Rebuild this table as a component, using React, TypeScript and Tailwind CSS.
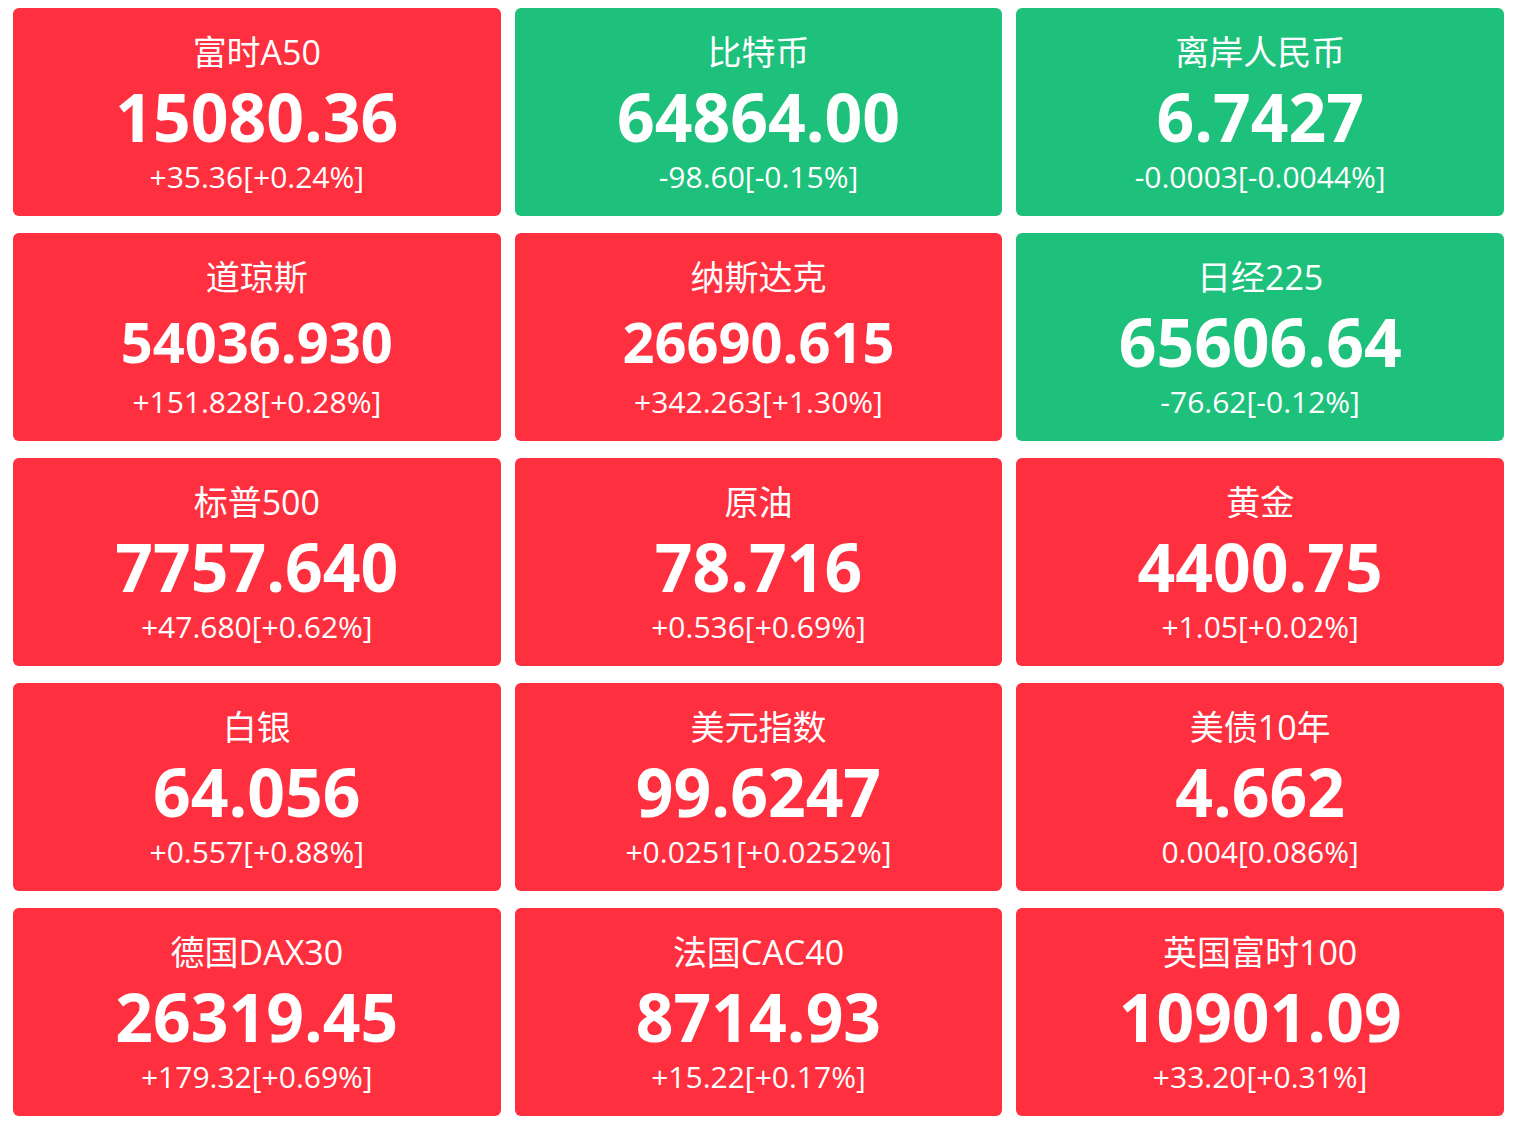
import React from "react";

type Quote = {
  name: string;
  price: string;
  change: string;
  up: boolean;
};

const quotes: Quote[] = [
  { name: "富时A50", price: "15080.36", change: "+35.36[+0.24%]", up: true },
  { name: "比特币", price: "64864.00", change: "-98.60[-0.15%]", up: false },
  { name: "离岸人民币", price: "6.7427", change: "-0.0003[-0.0044%]", up: false },
  { name: "道琼斯", price: "54036.930", change: "+151.828[+0.28%]", up: true },
  { name: "纳斯达克", price: "26690.615", change: "+342.263[+1.30%]", up: true },
  { name: "日经225", price: "65606.64", change: "-76.62[-0.12%]", up: false },
  { name: "标普500", price: "7757.640", change: "+47.680[+0.62%]", up: true },
  { name: "原油", price: "78.716", change: "+0.536[+0.69%]", up: true },
  { name: "黄金", price: "4400.75", change: "+1.05[+0.02%]", up: true },
  { name: "白银", price: "64.056", change: "+0.557[+0.88%]", up: true },
  { name: "美元指数", price: "99.6247", change: "+0.0251[+0.0252%]", up: true },
  { name: "美债10年", price: "4.662", change: "0.004[0.086%]", up: true },
  { name: "德国DAX30", price: "26319.45", change: "+179.32[+0.69%]", up: true },
  { name: "法国CAC40", price: "8714.93", change: "+15.22[+0.17%]", up: true },
  { name: "英国富时100", price: "10901.09", change: "+33.20[+0.31%]", up: true },
];

function QuoteCard({ q }: { q: Quote }) {
  // long prices get shrunk so they fit the card
  const priceSize = q.price.length > 8 ? "text-[56px]" : "text-[66px]";
  return (
    <div
      className={
        "h-[208px] rounded-md flex flex-col items-center text-white pt-6 " +
        (q.up ? "bg-[#fe2f3e]" : "bg-[#1dc17c]")
      }
    >
      <div className="text-[34px] leading-[40px]">{q.name}</div>
      <div className={"mt-3 leading-[64px] font-bold " + priceSize}>{q.price}</div>
      <div className="mt-[11px] text-[30px] leading-[36px]">{q.change}</div>
    </div>
  );
}

export default function App() {
  return (
    <main
      className="min-h-screen bg-white pl-[13px] pr-3 pt-2 pb-2"
      style={{ fontFamily: '"Open Sans", "Noto Sans CJK SC", sans-serif' }}
    >
      <div className="grid grid-cols-3 gap-x-[14px] gap-y-[17px]">
        {quotes.map((q, i) => (
          <QuoteCard key={i} q={q} />
        ))}
      </div>
    </main>
  );
}
